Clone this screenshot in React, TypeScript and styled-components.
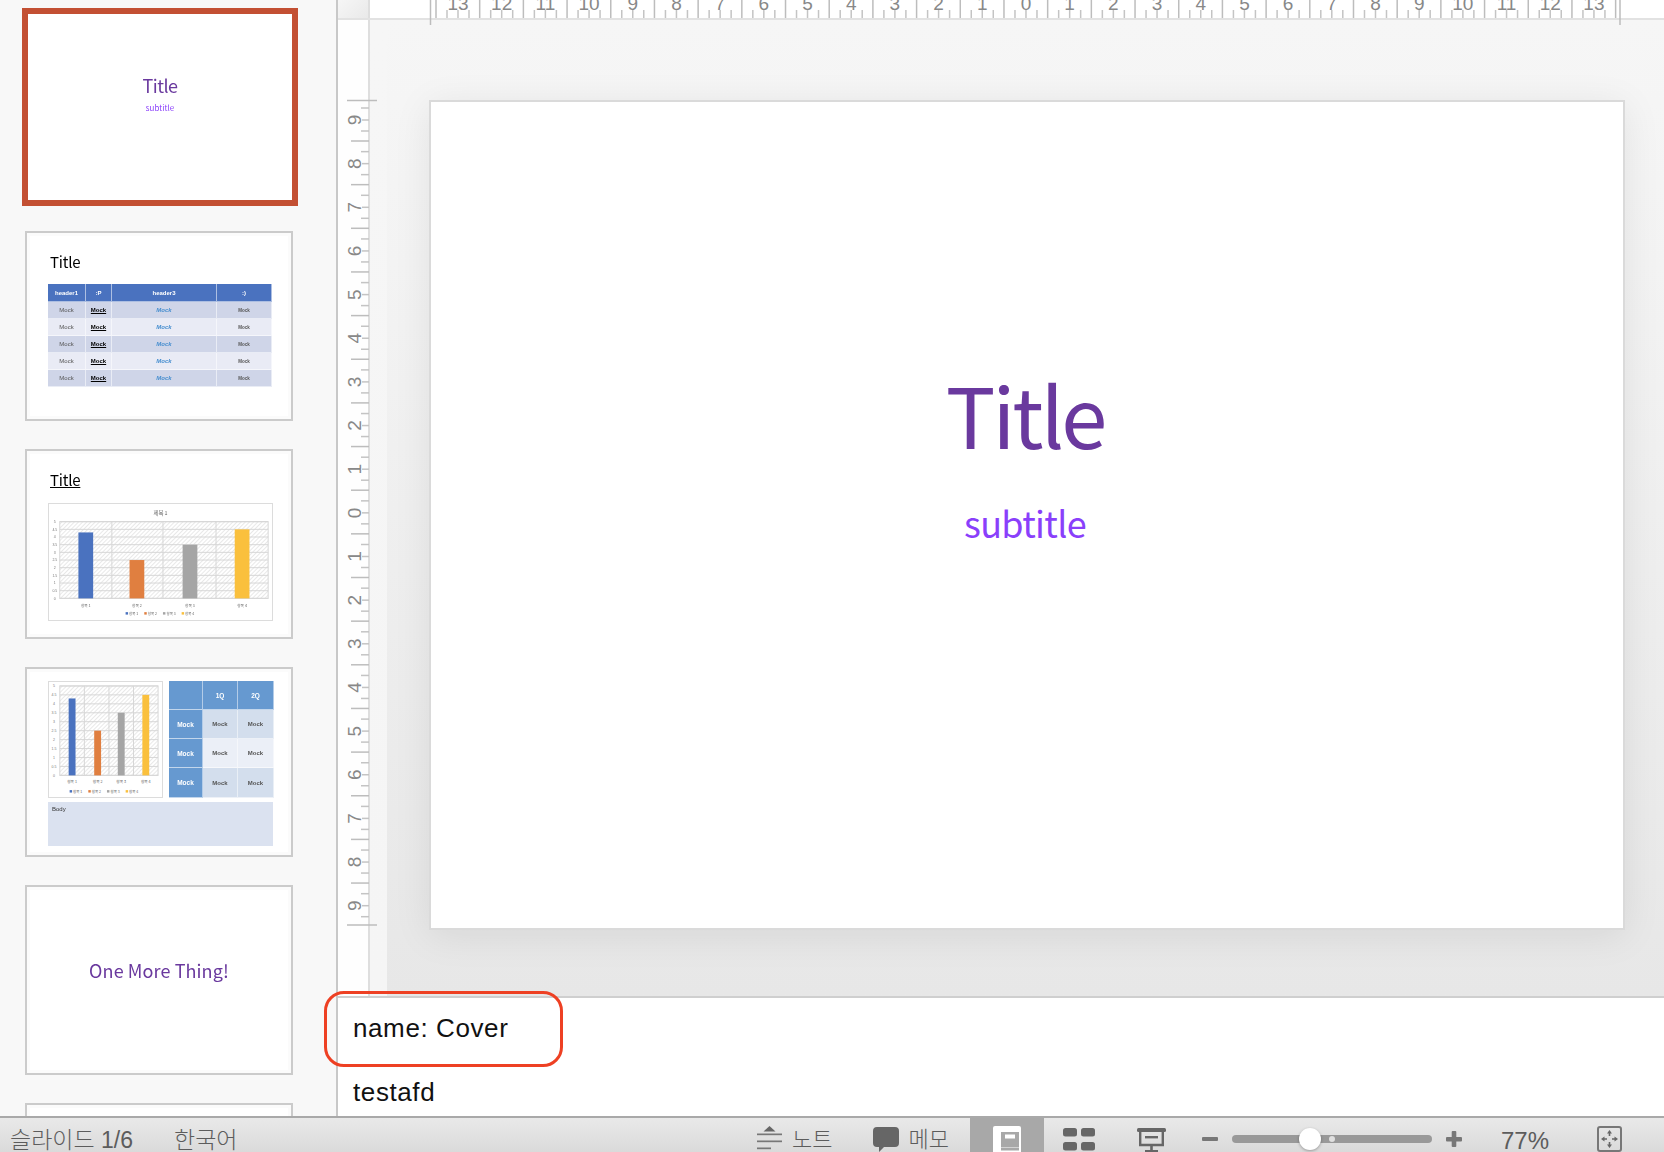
import React from "react";
import styled, { createGlobalStyle } from "styled-components";

const GlobalStyle = createGlobalStyle`
  html, body {
    margin: 0;
    padding: 0;
    height: 1152px;
    overflow: hidden;
    background: #ffffff;
    font-family: "Liberation Sans", "Noto Sans CJK KR", sans-serif;
  }
  * { box-sizing: border-box; }
`;

const CJK = `"Noto Sans CJK KR", "Liberation Sans", sans-serif`;
const PURPLE = "#6a399e";
const VIOLET = "#8a3ffb";

const Page = styled.div`
  width: 1664px;
  height: 1152px;
  display: flex;
  flex-direction: column;
  overflow: hidden;
`;

const Main = styled.div`
  flex: 1;
  min-height: 0;
  display: flex;
`;

/* ---------- left slide list ---------- */

const Sidebar = styled.div`
  width: 338px;
  flex: none;
  background: #f8f8f8;
  border-right: 2px solid #c8c8c8;
  padding-top: 8px;
  overflow: hidden;
`;

const Thumb = styled.div<{ $active?: boolean }>`
  width: ${(p) => (p.$active ? 276 : 268)}px;
  height: ${(p) => (p.$active ? 198 : 190)}px;
  margin-left: ${(p) => (p.$active ? 22 : 25)}px;
  margin-bottom: ${(p) => (p.$active ? 25 : 28)}px;
  border: ${(p) => (p.$active ? "6px solid #c35033" : "2px solid #cbcbcb")};
  background: #fff;
  box-shadow: ${(p) => (p.$active ? "none" : "inset 0 0 0 3px #fbfbfb")};
`;

const ThumbInner = styled.div<{ $center?: boolean }>`
  width: 100%;
  height: 100%;
  display: flex;
  flex-direction: column;
  filter: blur(0.35px);
  ${(p) => p.$center && "align-items: center; justify-content: center;"}
`;

const MiniCover = styled.div`
  font-family: ${CJK};
  font-size: 18px;
  line-height: 24px;
  letter-spacing: -0.5px;
  color: ${PURPLE};
  margin-top: -28px;
`;

const MiniSubtitle = styled.div`
  font-family: ${CJK};
  font-size: 8px;
  line-height: 12px;
  margin-top: 5px;
  color: ${VIOLET};
`;

const MiniTitle = styled.div<{ $underline?: boolean }>`
  font-family: ${CJK};
  font-size: 15px;
  line-height: 20px;
  letter-spacing: -0.2px;
  color: #000;
  margin: 19px 0 0 23px;
  text-decoration: ${(p) => (p.$underline ? "underline" : "none")};
`;

const MiniTable = styled.div`
  display: grid;
  grid-template-columns: 38px 26px 105px 55px;
  grid-template-rows: 18px repeat(5, 17px);
  margin: 12px 0 0 21px;
  width: 224px;
`;

const MiniCell = styled.div<{ $bg: string; $color?: string; $size?: number; $bold?: boolean; $italic?: boolean; $underline?: boolean }>`
  display: flex;
  align-items: center;
  justify-content: center;
  background: ${(p) => p.$bg};
  border-right: 1px solid rgba(255, 255, 255, 0.55);
  border-bottom: 1px solid rgba(255, 255, 255, 0.55);
  color: ${(p) => p.$color || "#555"};
  font-size: ${(p) => p.$size || 6}px;
  font-weight: ${(p) => (p.$bold ? 700 : 400)};
  font-style: ${(p) => (p.$italic ? "italic" : "normal")};
  text-decoration: ${(p) => (p.$underline ? "underline" : "none")};
  overflow: hidden;
`;

const ChartFrame = styled.svg`
  display: block;
  flex: none;
  background: #fff;
  border: 1px solid #dcdcdc;
`;

const ChartBlock = styled.div`
  margin: 13px 0 0 21px;
`;

const MixedRow = styled.div`
  display: flex;
  gap: 6px;
  margin: 12px 0 0 21px;
`;

const QuadTable = styled.div`
  display: grid;
  grid-template-columns: 34px 35px 36px;
  grid-template-rows: 29px 29px 29px 30px;
`;

const QuadCell = styled.div<{ $bg: string; $light?: boolean }>`
  display: flex;
  align-items: center;
  justify-content: center;
  background: ${(p) => p.$bg};
  color: ${(p) => (p.$light ? "#fff" : "#555")};
  font-size: ${(p) => (p.$light ? 6.5 : 6)}px;
  font-weight: 700;
  border-right: 1px solid rgba(255, 255, 255, 0.5);
  border-bottom: 1px solid rgba(255, 255, 255, 0.6);
`;

const BodyBox = styled.div`
  width: 225px;
  height: 44px;
  margin: 4px 0 0 21px;
  padding: 3px 4px;
  background: #dbe2f0;
  font-size: 6px;
  line-height: 8px;
  color: #333;
`;

const MiniEnd = styled.div`
  font-family: ${CJK};
  font-size: 18px;
  line-height: 22px;
  letter-spacing: 0.1px;
  color: ${PURPLE};
  margin-top: -20px;
`;

/* ---------- editor ---------- */

const Editor = styled.div`
  flex: 1;
  min-width: 0;
  display: flex;
  flex-direction: column;
`;

const TopBar = styled.div`
  height: 20px;
  flex: none;
  display: flex;
  background: #fff;
  border-bottom: 2px solid #e2e2e2;
`;

const RulerCorner = styled.div`
  width: 32px;
  flex: none;
  background: linear-gradient(135deg, #f6f6f6, #e9e9e9);
  border-right: 2px solid #dedede;
`;

const RulerSvg = styled.svg`
  display: block;
  flex: none;
  overflow: visible;
  position: relative;
  z-index: 2;
`;

const EditorBody = styled.div`
  flex: 1;
  min-height: 0;
  display: flex;
`;

const SideRuler = styled.div`
  width: 32px;
  flex: none;
  background: #fefefe;
  border-right: 2px solid #dedede;
`;

const Strip = styled.div`
  width: 17px;
  flex: none;
  background: linear-gradient(#f6f6f6, #f5f5f5);
`;

const Workspace = styled.div`
  flex: 1;
  min-width: 0;
  padding: 80px 0 0 42px;
  background: linear-gradient(#f6f6f6 0%, #f3f3f3 25%, #e7e7e7 100%);
  overflow: hidden;
`;

const Slide = styled.div`
  width: 1196px;
  height: 830px;
  background: #fff;
  border: 2px solid #dadada;
  box-shadow: 0 6px 36px rgba(0, 0, 0, 0.08);
  display: flex;
  flex-direction: column;
  align-items: center;
  padding: 258px 4px 0 0;
  font-family: ${CJK};
`;

const SlideTitle = styled.div`
  font-size: 83px;
  line-height: 106px;
  letter-spacing: -3px;
  color: ${PURPLE};
`;

const SlideSubtitle = styled.div`
  font-size: 36px;
  line-height: 48px;
  letter-spacing: -0.7px;
  margin-top: 32px;
  color: ${VIOLET};
`;

const Notes = styled.div`
  height: 120px;
  flex: none;
  position: relative;
  background: #fff;
  border-top: 2px solid #cfcfcf;
  padding: 14px 0 0 15px;
  font-size: 26px;
  line-height: 32px;
  letter-spacing: 0.6px;
  color: #111;
`;

const NoteLine = styled.div`
  margin-bottom: 32px;
`;

const Annotation = styled.div`
  position: absolute;
  left: -14px;
  top: -7px;
  width: 239px;
  height: 76px;
  border: 3.5px solid #ee4023;
  border-radius: 20px;
`;

/* ---------- status bar ---------- */

const StatusBar = styled.div`
  height: 36px;
  flex: none;
  display: flex;
  background: linear-gradient(#e9e9e9, #dadada);
  border-top: 2px solid #a9a9a9;
  padding: 0 42px 0 10px;
  overflow: hidden;
`;

const StatusText = styled.div<{ $ml?: number; $size?: number; $latin?: boolean }>`
  display: flex;
  align-items: center;
  padding-top: ${(p) => (p.$latin ? 12 : 10)}px;
  margin-left: ${(p) => p.$ml || 0}px;
  font-family: "Liberation Sans", "Noto Sans CJK KR", sans-serif;
  font-size: ${(p) => p.$size || 22}px;
  font-weight: ${(p) => (p.$latin ? 400 : 300)};
  line-height: 24px;
  color: #5c5c5c;
  white-space: nowrap;
`;

const Spacer = styled.div`
  flex: 1;
`;

const StatusIcon = styled.svg<{ $ml?: number }>`
  display: block;
  flex: none;
  align-self: flex-end;
  margin-left: ${(p) => p.$ml || 0}px;
`;

const ActiveView = styled.div`
  width: 74px;
  flex: none;
  margin-left: 21px;
  background: #a8a8a8;
  display: flex;
  justify-content: center;
  align-items: flex-end;
`;

const ZoomSlider = styled.div`
  position: relative;
  width: 200px;
  height: 26px;
  flex: none;
  align-self: flex-end;
  margin-left: 14px;
  display: flex;
  align-items: center;
`;

const ZoomTrack = styled.div`
  width: 100%;
  height: 8px;
  border-radius: 4px;
  background: #999;
`;

const ZoomNotch = styled.div`
  position: absolute;
  left: 97px;
  top: 10px;
  width: 6px;
  height: 6px;
  border-radius: 50%;
  background: #e0e0e0;
`;

const ZoomThumb = styled.div`
  position: absolute;
  left: 67px;
  top: 2px;
  width: 22px;
  height: 22px;
  border-radius: 50%;
  background: #fff;
  box-shadow: 0 1px 3px rgba(0, 0, 0, 0.3);
`;

/* ---------- drawings ---------- */

const HORIZONTAL_STEP = 43.69;
const VERTICAL_STEP = 43.65;

function TopRuler() {
  const longs = Array.from({ length: 28 }, (_, k) => 66 + HORIZONTAL_STEP * k);
  const labels = Array.from({ length: 27 }, (_, k) => ({ x: 88 + HORIZONTAL_STEP * k, n: Math.abs(13 - k) }));
  return (
    <RulerSvg width="1294" height="18">
      {longs.map((x) => (
        <line key={x} x1={x} x2={x} y1="0" y2="18" stroke="#bdbdbd" strokeWidth="1.5" />
      ))}
      {labels.map(({ x, n }) => (
        <g key={x}>
          <line x1={x - 11} x2={x - 11} y1="10" y2="18" stroke="#c4c4c4" strokeWidth="1.5" />
          <line x1={x} x2={x} y1="10" y2="18" stroke="#c4c4c4" strokeWidth="1.5" />
          <line x1={x + 11} x2={x + 11} y1="10" y2="18" stroke="#c4c4c4" strokeWidth="1.5" />
          <text x={x} y="10" textAnchor="middle" fontSize="19" fill="#888" fontFamily="Liberation Sans">
            {n}
          </text>
        </g>
      ))}
      <line x1="60.5" x2="60.5" y1="0" y2="25" stroke="#bdbdbd" strokeWidth="1.5" />
      <line x1="1250" x2="1250" y1="0" y2="25" stroke="#bdbdbd" strokeWidth="1.5" />
    </RulerSvg>
  );
}

function LeftRuler() {
  const labels = Array.from({ length: 19 }, (_, k) => ({ y: 100 + VERTICAL_STEP * k, n: Math.abs(9 - k) }));
  const longs = Array.from({ length: 18 }, (_, k) => 121 + VERTICAL_STEP * k);
  return (
    <RulerSvg width="30" height="976">
      {longs.map((y) => (
        <line key={y} x1="13" x2="31" y1={y} y2={y} stroke="#bdbdbd" strokeWidth="1.5" />
      ))}
      {labels.map(({ y, n }) => (
        <g key={y}>
          <line x1="23" x2="31" y1={y - 12} y2={y - 12} stroke="#c4c4c4" strokeWidth="1.5" />
          <line x1="24" x2="31" y1={y} y2={y} stroke="#c4c4c4" strokeWidth="1.5" />
          <line x1="23" x2="31" y1={y + 11} y2={y + 11} stroke="#c4c4c4" strokeWidth="1.5" />
          <text
            x="0"
            y="0"
            textAnchor="middle"
            fontSize="19"
            fill="#888"
            fontFamily="Liberation Sans"
            transform={`translate(23 ${y}) rotate(-90)`}
          >
            {n}
          </text>
        </g>
      ))}
      <line x1="9" x2="39" y1="80.5" y2="80.5" stroke="#bdbdbd" strokeWidth="1.5" />
      <line x1="9" x2="39" y1="905" y2="905" stroke="#bdbdbd" strokeWidth="1.5" />
    </RulerSvg>
  );
}

const BAR_COLORS = ["#4a72bf", "#e07f40", "#a5a5a5", "#fac03d"];
const BAR_VALUES = [4.3, 2.5, 3.5, 4.5];

interface ChartProps {
  id: string;
  width: number;
  height: number;
  plot: { x: number; y: number; w: number; h: number };
  bars: number[];
  barWidth: number;
  dividers: number[];
  title?: string;
  legendY: number;
  labelY: number;
  legendX: number;
}

function MiniChart({ id, width, height, plot, bars, barWidth, dividers, title, legendY, labelY, legendX }: ChartProps) {
  const rows = Array.from({ length: 11 }, (_, k) => k);
  return (
    <ChartFrame width={width} height={height} viewBox={`0 0 ${width} ${height}`}>
      <defs>
        <pattern id={id} width="3" height="3" patternUnits="userSpaceOnUse" patternTransform="rotate(45)">
          <line x1="0" x2="0" y1="0" y2="3" stroke="#d4d4d4" strokeWidth="1.1" />
        </pattern>
      </defs>
      {title && (
        <text x={width / 2} y="11" textAnchor="middle" fontSize="5.5" fill="#666" fontFamily="Noto Sans CJK KR">
          {title}
        </text>
      )}
      <rect x={plot.x} y={plot.y} width={plot.w} height={plot.h} fill={`url(#${id})`} stroke="#d6d6d6" />
      {rows.map((k) => (
        <g key={k}>
          <line x1={plot.x} x2={plot.x + plot.w} y1={plot.y + (plot.h * k) / 10} y2={plot.y + (plot.h * k) / 10} stroke="#d6d6d6" />
          <text x="5" y={plot.y + (plot.h * k) / 10 + 1.5} textAnchor="middle" fontSize="3.6" fill="#777">
            {(5 - k * 0.5).toString()}
          </text>
        </g>
      ))}
      {dividers.map((x) => (
        <line key={x} x1={x} x2={x} y1={plot.y} y2={plot.y + plot.h} stroke="#d6d6d6" />
      ))}
      {bars.map((x, i) => {
        const h = (plot.h * BAR_VALUES[i]) / 5;
        return (
          <g key={x}>
            <rect x={x} y={plot.y + plot.h - h} width={barWidth} height={h} fill={BAR_COLORS[i]} />
            <text x={x + barWidth / 2} y={labelY} textAnchor="middle" fontSize="3.8" fill="#666" fontFamily="Noto Sans CJK KR">
              항목 {i + 1}
            </text>
            <rect x={legendX + i * 19} y={legendY - 3} width="2.5" height="2.5" fill={BAR_COLORS[i]} />
            <text x={legendX + 3.5 + i * 19} y={legendY} fontSize="3.6" fill="#666" fontFamily="Noto Sans CJK KR">
              항목 {i + 1}
            </text>
          </g>
        );
      })}
    </ChartFrame>
  );
}

function NotesIcon() {
  return (
    <StatusIcon $ml={0} width="25" height="26" viewBox="0 0 25 26">
      <path d="M12.5 0 L18.5 5.5 H6.5 Z" fill="#666" />
      <rect x="0" y="7.5" width="25" height="1.7" fill="#777" />
      <rect x="0" y="14.5" width="25" height="1.7" fill="#777" />
      <rect x="0" y="21.5" width="14" height="1.7" fill="#777" />
    </StatusIcon>
  );
}

function CommentIcon() {
  return (
    <StatusIcon $ml={41} width="26" height="26" viewBox="0 0 26 26">
      <path d="M4 1 H22 a4 4 0 0 1 4 4 V17 a4 4 0 0 1 -4 4 H11 L6 26 V21 H4 a4 4 0 0 1 -4 -4 V5 a4 4 0 0 1 4 -4 Z" fill="#666" />
    </StatusIcon>
  );
}

function NormalViewIcon() {
  return (
    <StatusIcon width="28" height="26" viewBox="0 0 28 26">
      <path d="M2 0 H26 a2 2 0 0 1 2 2 V26 H0 V2 a2 2 0 0 1 2 -2 Z" fill="#fff" />
      <rect x="8" y="6" width="18" height="15" fill="#a8a8a8" />
      <rect x="12" y="8.5" width="10" height="4" fill="#fff" />
      <rect x="8" y="21.5" width="18" height="3" fill="#a8a8a8" />
    </StatusIcon>
  );
}

function GridIcon() {
  return (
    <StatusIcon $ml={19} width="32" height="26" viewBox="0 0 32 26">
      <rect x="0" y="2" width="14" height="8.5" rx="2.5" fill="#666" />
      <rect x="18" y="2" width="14" height="8.5" rx="2.5" fill="#666" />
      <rect x="0" y="16" width="14" height="8.5" rx="2.5" fill="#666" />
      <rect x="18" y="16" width="14" height="8.5" rx="2.5" fill="#666" />
    </StatusIcon>
  );
}

function PresenterIcon() {
  return (
    <StatusIcon $ml={42} width="29" height="26" viewBox="0 0 29 26">
      <rect x="0" y="2" width="29" height="4" rx="1.5" fill="#666" />
      <path d="M3.2 5 V19 H25.8 V5" fill="none" stroke="#666" strokeWidth="2.4" />
      <rect x="8" y="10" width="13" height="2.4" fill="#666" />
      <rect x="13.2" y="19" width="2.6" height="6" fill="#666" />
      <rect x="8" y="24" width="13" height="2" fill="#666" />
    </StatusIcon>
  );
}

function MinusIcon() {
  return (
    <StatusIcon $ml={36} width="16" height="26" viewBox="0 0 16 26">
      <rect x="0" y="11" width="16" height="4" rx="1" fill="#777" />
    </StatusIcon>
  );
}

function PlusIcon() {
  return (
    <StatusIcon $ml={14} width="16" height="26" viewBox="0 0 16 26">
      <rect x="0" y="11" width="16" height="4.5" rx="1" fill="#777" />
      <rect x="5.7" y="5" width="4.6" height="16" rx="1" fill="#777" />
    </StatusIcon>
  );
}

function FitIcon() {
  return (
    <StatusIcon $ml={48} width="25" height="26" viewBox="0 0 25 26">
      <rect x="1" y="1" width="23" height="24" rx="2" fill="none" stroke="#777" strokeWidth="2" />
      <path d="M12.5 4 L15 7.5 H13.3 V10 H11.7 V7.5 H10 Z" fill="#666" />
      <path d="M12.5 22 L15 18.5 H13.3 V16 H11.7 V18.5 H10 Z" fill="#666" />
      <path d="M4 13 L7.5 10.5 V12.2 H10 V13.8 H7.5 V15.5 Z" fill="#666" />
      <path d="M21 13 L17.5 10.5 V12.2 H15 V13.8 H17.5 V15.5 Z" fill="#666" />
    </StatusIcon>
  );
}

/* ---------- data ---------- */

const ROW_BG = ["#cfd5e8", "#e9ebf5", "#cfd5e8", "#e9ebf5", "#cfd5e8"];
const HEADER_BG = "#4a72bf";
const QUAD_DARK = "#6699d0";
const QUAD_ROWS = ["#d3deed", "#ebeff7", "#d3deed"];

function TableSlide() {
  return (
    <ThumbInner>
      <MiniTitle>Title</MiniTitle>
      <MiniTable>
        <MiniCell $bg={HEADER_BG} $color="#fff" $bold>header1</MiniCell>
        <MiniCell $bg={HEADER_BG} $color="#fff" $bold>:P</MiniCell>
        <MiniCell $bg={HEADER_BG} $color="#fff" $bold>header3</MiniCell>
        <MiniCell $bg={HEADER_BG} $color="#fff" $bold>:)</MiniCell>
        {ROW_BG.map((bg, i) => (
          <React.Fragment key={i}>
            <MiniCell $bg={bg}>Mock</MiniCell>
            <MiniCell $bg={bg} $color="#000" $bold $underline>Mock</MiniCell>
            <MiniCell $bg={bg} $color="#4a90d0" $italic $bold>Mock</MiniCell>
            <MiniCell $bg={bg} $size={4.5} $bold>Mock</MiniCell>
          </React.Fragment>
        ))}
      </MiniTable>
    </ThumbInner>
  );
}

function ChartSlide() {
  return (
    <ThumbInner>
      <MiniTitle $underline>Title</MiniTitle>
      <ChartBlock>
        <MiniChart
          id="hatchWide"
          width={225}
          height={118}
          plot={{ x: 10, y: 18, w: 212, h: 78 }}
          bars={[29, 81, 135, 188]}
          barWidth={15}
          dividers={[63, 115, 169]}
          title="제목 1"
          labelY={105}
          legendY={113}
          legendX={77}
        />
      </ChartBlock>
    </ThumbInner>
  );
}

function MixedSlide() {
  return (
    <ThumbInner>
      <MixedRow>
        <MiniChart
          id="hatchNarrow"
          width={115}
          height={117}
          plot={{ x: 11, y: 4, w: 100, h: 91 }}
          bars={[20, 46, 70, 95]}
          barWidth={7}
          dividers={[36, 61, 86]}
          labelY={103}
          legendY={113}
          legendX={21}
        />
        <QuadTable>
          <QuadCell $bg={QUAD_DARK} $light />
          <QuadCell $bg={QUAD_DARK} $light>1Q</QuadCell>
          <QuadCell $bg={QUAD_DARK} $light>2Q</QuadCell>
          {QUAD_ROWS.map((bg, i) => (
            <React.Fragment key={i}>
              <QuadCell $bg={QUAD_DARK} $light>Mock</QuadCell>
              <QuadCell $bg={bg}>Mock</QuadCell>
              <QuadCell $bg={bg}>Mock</QuadCell>
            </React.Fragment>
          ))}
        </QuadTable>
      </MixedRow>
      <BodyBox>Body</BodyBox>
    </ThumbInner>
  );
}

export default function App() {
  return (
    <Page>
      <GlobalStyle />
      <Main>
        <Sidebar>
          <Thumb $active>
            <ThumbInner $center>
              <MiniCover>Title</MiniCover>
              <MiniSubtitle>subtitle</MiniSubtitle>
            </ThumbInner>
          </Thumb>
          <Thumb><TableSlide /></Thumb>
          <Thumb><ChartSlide /></Thumb>
          <Thumb><MixedSlide /></Thumb>
          <Thumb>
            <ThumbInner $center>
              <MiniEnd>One More Thing!</MiniEnd>
            </ThumbInner>
          </Thumb>
          <Thumb />
        </Sidebar>
        <Editor>
          <TopBar>
            <RulerCorner />
            <TopRuler />
          </TopBar>
          <EditorBody>
            <SideRuler>
              <LeftRuler />
            </SideRuler>
            <Strip />
            <Workspace>
              <Slide>
                <SlideTitle>Title</SlideTitle>
                <SlideSubtitle>subtitle</SlideSubtitle>
              </Slide>
            </Workspace>
          </EditorBody>
          <Notes>
            <NoteLine>name: Cover</NoteLine>
            <NoteLine>testafd</NoteLine>
            <Annotation />
          </Notes>
        </Editor>
      </Main>
      <StatusBar>
        <StatusText $size={23}>슬라이드 1/6</StatusText>
        <StatusText $size={23} $ml={41}>한국어</StatusText>
        <Spacer />
        <NotesIcon />
        <StatusText $ml={10}>노트</StatusText>
        <CommentIcon />
        <StatusText $ml={9}>메모</StatusText>
        <ActiveView>
          <NormalViewIcon />
        </ActiveView>
        <GridIcon />
        <PresenterIcon />
        <MinusIcon />
        <ZoomSlider>
          <ZoomTrack />
          <ZoomNotch />
          <ZoomThumb />
        </ZoomSlider>
        <PlusIcon />
        <StatusText $size={24} $ml={39} $latin>77%</StatusText>
        <FitIcon />
      </StatusBar>
    </Page>
  );
}
